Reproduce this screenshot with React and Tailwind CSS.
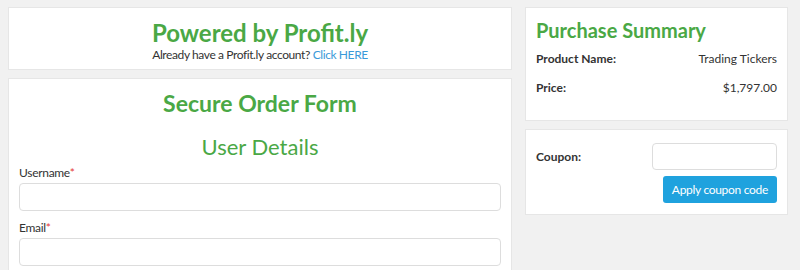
const Field = ({ label }) => (
  <div className="mb-[9px]">
    <label className="block text-[12px] leading-[15px] tracking-[-0.3px] text-[#333] mb-[3px]">
      {label}
      <span className="text-[#e53935]">*</span>
    </label>
    <input className="w-full h-[28px] rounded border border-[#ddd] bg-white" />
  </div>
);

export default function App() {
  return (
    <div
      className="h-screen overflow-hidden bg-[#f1f1f1] pl-[8px] pr-[12px] pt-[7px] flex items-start gap-[13px]"
      style={{ fontFamily: "Lato, 'Open Sans', sans-serif" }}
    >
      <div className="w-[504px] shrink-0 flex flex-col gap-[8px]">
        <div className="shrink-0 bg-white border border-[#e6e6e6] h-[63px] flex flex-col items-center pt-[11px]">
          <h1 className="text-[24px] leading-[28px] font-bold text-[#4aa845]">
            Powered by Profit.ly
          </h1>
          <p className="text-[12px] leading-[15px] tracking-[-0.4px] text-[#333]">
            Already have a Profit.ly account?{" "}
            <a className="text-[#3a9ad9]">Click HERE</a>
          </p>
        </div>
        <div className="shrink-0 bg-white border border-[#e6e6e6] px-[10px] pt-[11px] pb-[20px]">
          <h2 className="text-center text-[23px] leading-[26px] font-bold text-[#4aa845]">
            Secure Order Form
          </h2>
          <h3 className="text-center text-[22px] leading-[28px] text-[#4aa845] mt-[17px] mb-[4px]">
            User Details
          </h3>
          <Field label="Username" />
          <Field label="Email" />
        </div>
      </div>
      <div className="flex-1 flex flex-col gap-[8px]">
        <div className="shrink-0 bg-white border border-[#e6e6e6] h-[114px] px-[10px] pt-[9px]">
          <h2 className="text-[20px] leading-[26px] font-bold text-[#4aa845]">
            Purchase Summary
          </h2>
          <div className="flex justify-between text-[12px] leading-[16px] text-[#333] mt-[8px]">
            <span className="font-bold">Product Name:</span>
            <span>Trading Tickers</span>
          </div>
          <div className="flex justify-between text-[12px] leading-[16px] text-[#333] mt-[13px]">
            <span className="font-bold">Price:</span>
            <span>$1,797.00</span>
          </div>
        </div>
        <div className="shrink-0 bg-white border border-[#e6e6e6] h-[86px] px-[10px] pt-[13px] flex justify-between">
          <span className="text-[12px] font-bold text-[#333] mt-[5px]">Coupon:</span>
          <div className="flex flex-col items-end gap-[6px]">
            <input className="w-[125px] h-[27px] rounded border border-[#ddd] bg-white" />
            <button className="h-[27px] px-[9px] rounded-[3px] bg-[#1fa2de] text-white text-[12px] tracking-[-0.3px]">
              Apply coupon code
            </button>
          </div>
        </div>
      </div>
    </div>
  );
}
